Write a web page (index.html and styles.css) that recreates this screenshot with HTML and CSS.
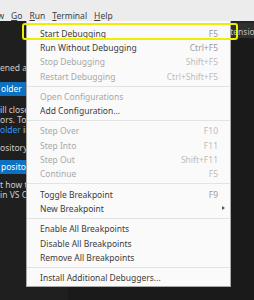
FILE: index.html
```html
<!DOCTYPE html>
<html>
<head>
<meta charset="utf-8">
<link rel="stylesheet" href="styles.css">
</head>
<body>
<div class="app">
  <div class="menubar">
    <span class="mb-item first"><u>V</u>iew</span>
    <span class="mb-item"><u>G</u>o</span>
    <span class="mb-item active"><u>R</u>un</span>
    <span class="mb-item"><u>T</u>erminal</span>
    <span class="mb-item"><u>H</u>elp</span>
  </div>
  <div class="main">
    <div class="welcome">
      <div class="line l1">ened a folder, you can</div>
      <div class="btn b1">older</div>
      <div class="para p2">
        <div class="line">ill close the editors.</div>
        <div class="line">ors. To keep them open</div>
        <div class="line"><span class="link">older</span> instead.</div>
      </div>
      <div class="line l3">ository locally</div>
      <div class="btn b2">pository</div>
      <div class="para p4">
        <div class="line">t how to use git</div>
        <div class="line">in VS Code, read</div>
      </div>
    </div>
    <div class="editor">
      <div class="tabs">
        <div class="tab">Extension: Python</div>
      </div>
      <div class="code">
        <div class="cl">&nbsp;</div>
        <div class="cl">&nbsp;</div>
        <div class="cl">&nbsp;</div>
        <div class="cl">&nbsp;</div>
        <div class="cl">&nbsp;</div>
        <div class="cl">&nbsp;</div>
        <div class="cl">&nbsp;</div>
        <div class="cl">&nbsp;</div>
        <div class="cl"><span class="str">ders for work</span></div>
        <div class="cl"><span class="str">")</span><span class="pun">;</span></div>
        <div class="cl">&nbsp;</div>
        <div class="cl">&nbsp;</div>
        <div class="cl">&nbsp;</div>
        <div class="cl"><span class="str">e of </span><span class="var">${</span></div>
      </div>
    </div>
  </div>
</div>

<div class="menu">
  <div class="mi"><span class="lb">Start Debugging</span><span class="k">F5</span></div>
  <div class="mi"><span class="lb">Run Without Debugging</span><span class="k">Ctrl+F5</span></div>
  <div class="mi dis"><span class="lb">Stop Debugging</span><span class="k">Shift+F5</span></div>
  <div class="mi dis"><span class="lb">Restart Debugging</span><span class="k">Ctrl+Shift+F5</span></div>
  <div class="sep"></div>
  <div class="mi dis"><span class="lb">Open Configurations</span></div>
  <div class="mi"><span class="lb">Add Configuration...</span></div>
  <div class="sep"></div>
  <div class="mi dis"><span class="lb">Step Over</span><span class="k">F10</span></div>
  <div class="mi dis"><span class="lb">Step Into</span><span class="k">F11</span></div>
  <div class="mi dis"><span class="lb">Step Out</span><span class="k">Shift+F11</span></div>
  <div class="mi dis"><span class="lb">Continue</span><span class="k">F5</span></div>
  <div class="sep"></div>
  <div class="mi"><span class="lb">Toggle Breakpoint</span><span class="k">F9</span></div>
  <div class="mi"><span class="lb">New Breakpoint</span><span class="arrow"></span></div>
  <div class="sep"></div>
  <div class="mi"><span class="lb">Enable All Breakpoints</span></div>
  <div class="mi"><span class="lb">Disable All Breakpoints</span></div>
  <div class="mi"><span class="lb">Remove All Breakpoints</span></div>
  <div class="sep"></div>
  <div class="mi"><span class="lb">Install Additional Debuggers...</span></div>
</div>

<div class="highlight"></div>
</body>
</html>
```
FILE: styles.css
```css
* {
  box-sizing: border-box;
  margin: 0;
  padding: 0;
}

html, body {
  width: 254px;
  height: 300px;
  overflow: hidden;
}

body {
  position: relative;
  font-family: "Noto Sans", "DejaVu Sans", sans-serif;
  background: #1f1f1f;
}

.app {
  display: flex;
  flex-direction: column;
  height: 300px;
}

/* ---------- menubar ---------- */
.menubar {
  height: 21px;
  flex: none;
  background: #ececec;
  color: #3c3c3c;
  font-size: 8.5px;
  display: flex;
  align-items: center;
  padding-top: 10px;
  white-space: nowrap;
  overflow: hidden;
}

.mb-item {
  padding: 0 3.5px;
  line-height: 11px;
}

.mb-item.first {
  margin-left: -18px;
}

.mb-item u {
  text-decoration-thickness: 1px;
  text-underline-offset: 1px;
}

/* ---------- main area ---------- */
.main {
  flex: 1;
  display: flex;
  min-height: 0;
}

.welcome {
  width: 68px;
  flex: none;
  background: #1f1f1f;
  color: #cccccc;
  font-size: 8.5px;
  overflow: hidden;
  white-space: nowrap;
  display: flex;
  flex-direction: column;
  padding-top: 42px;
}

.line {
  height: 10px;
  line-height: 10px;
}

.link {
  color: #3794ff;
}

.btn {
  height: 14px;
  line-height: 14px;
  background: #0e70c0;
  color: #ffffff;
  padding-left: 1px;
}

.b1 { margin-top: 9px; }
.p2 { margin-top: 9px; }
.l3 { margin-top: 8px; }
.b2 { margin-top: 7px; }
.p4 { margin-top: 6px; }

.editor {
  flex: 1;
  background: #1a1a1a;
  display: flex;
  flex-direction: column;
  min-width: 0;
  overflow: hidden;
}

.tabs {
  height: 17px;
  flex: none;
  background: #252525;
  display: flex;
  padding-top: 2px;
}

.tab {
  background: #303030;
  color: #bdbdbd;
  font-size: 8.5px;
  line-height: 12px;
  padding: 3px 0 0 153px;
  white-space: nowrap;
  flex: 1;
}

.code {
  font-family: "DejaVu Sans Mono", monospace;
  font-size: 7.5px;
  line-height: 10px;
  padding: 8px 0 0 155.5px;
  white-space: pre;
  color: #cccccc;
}

.cl {
  height: 10px;
}

.str { color: #ce9178; }
.pun { color: #d4d4d4; }
.var { color: #4fc1ff; }

/* ---------- dropdown menu (overlay) ---------- */
.menu {
  position: absolute;
  left: 26px;
  top: 21px;
  width: 205px;
  background: #fafafa;
  border: 1px solid #a9a9a9;
  border-top: none;
  padding: 5px 0 1px;
  font-size: 8.5px;
  color: #3c3c3c;
}

.mi {
  height: 14.3px;
  display: flex;
  align-items: center;
  padding: 0 12px 0 13px;
  white-space: nowrap;
}

.mi .k {
  margin-left: auto;
  color: #9a9a9a;
}

.mi.dis {
  color: #a8a8a8;
}

.mi.dis .k {
  color: #bcbcbc;
}

.arrow {
  margin-left: auto;
  margin-right: -7px;
  width: 0;
  height: 0;
  border-top: 2.5px solid transparent;
  border-bottom: 2.5px solid transparent;
  border-left: 3px solid #555555;
}

.sep {
  height: 1px;
  background: #e3e3e3;
  margin: 2.5px 0;
}

/* ---------- yellow annotation ---------- */
.highlight {
  position: absolute;
  left: 22px;
  top: 23px;
  width: 216px;
  height: 17px;
  border: 2px solid #eeee00;
  border-radius: 3px;
}
```
